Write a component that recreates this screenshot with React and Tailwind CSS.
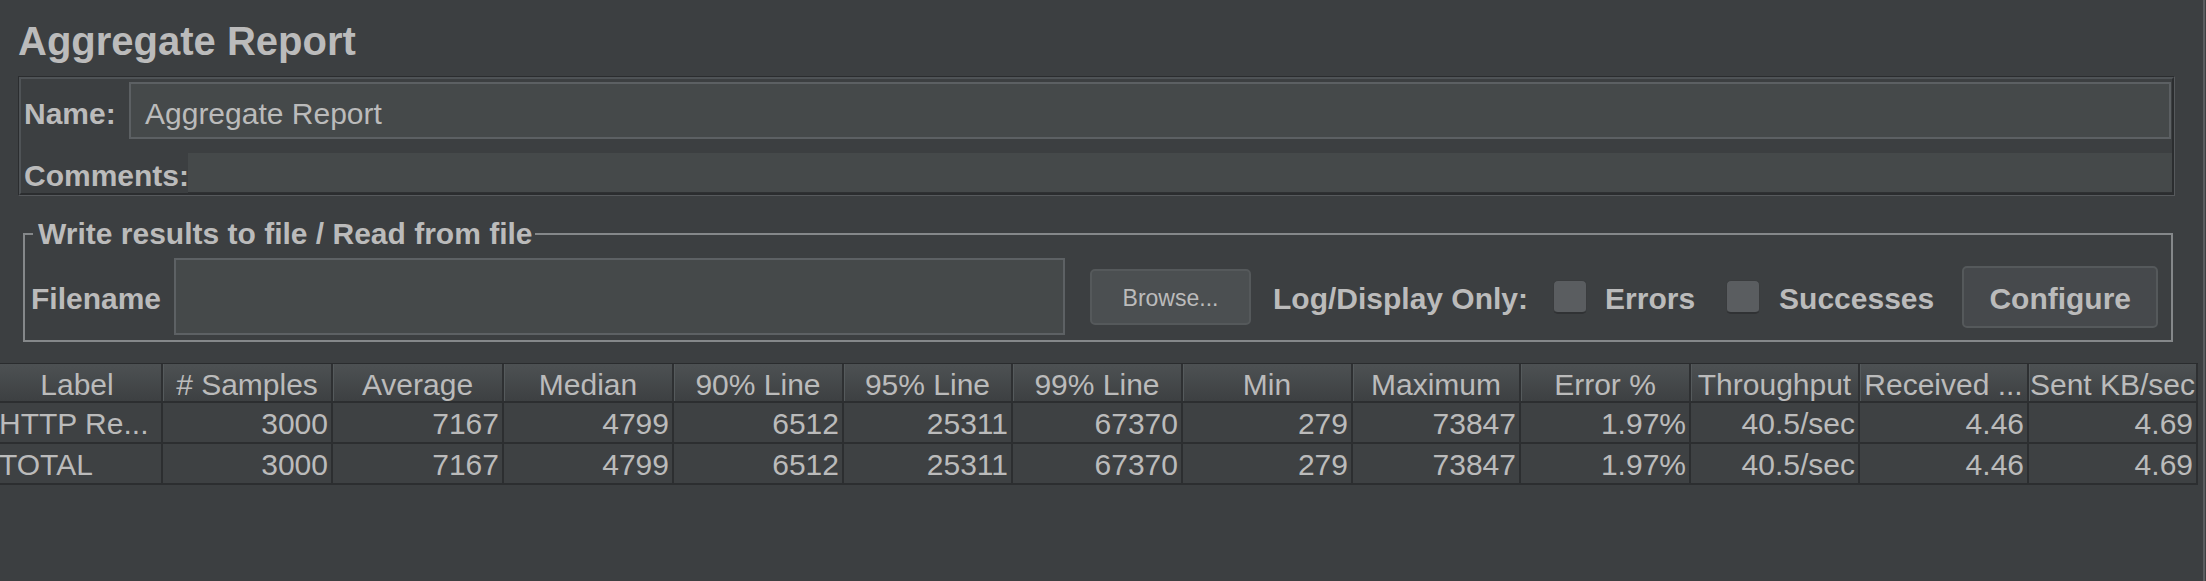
const columns = [
  'Label',
  '# Samples',
  'Average',
  'Median',
  '90% Line',
  '95% Line',
  '99% Line',
  'Min',
  'Maximum',
  'Error %',
  'Throughput',
  'Received ...',
  'Sent KB/sec',
]

const rows = [
  ['HTTP Re...', '3000', '7167', '4799', '6512', '25311', '67370', '279', '73847', '1.97%', '40.5/sec', '4.46', '4.69'],
  ['TOTAL', '3000', '7167', '4799', '6512', '25311', '67370', '279', '73847', '1.97%', '40.5/sec', '4.46', '4.69'],
]

const gridCols =
  'grid grid-cols-[170px_170px_171px_170px_170px_169px_170px_170px_168px_170px_169px_169px_169px]'

function Checkbox() {
  return (
    <div className="w-[34px] h-[34px] rounded-[5px] bg-[#5a5d60] border border-[#3a3c3e] border-b-2 border-b-[#303234]" />
  )
}

function ResultsTable() {
  return (
    <div className="-ml-[7px] w-[2205px] mt-[21px]">
      <div className={`${gridCols} h-[38px] border-t border-[#2a2c2e] bg-gradient-to-b from-[#4d5153] to-[#3d4042]`}>
        {columns.map((col) => (
          <div
            key={col}
            className="flex items-center justify-center pt-[5px] text-[30px] leading-none whitespace-nowrap overflow-hidden border-r-2 border-[#2e3032] shadow-[inset_1px_0_0_#555a5c]"
          >
            {col}
          </div>
        ))}
      </div>
      {rows.map((row, r) => (
        <div key={r} className={`${gridCols} h-[41px] border-t-2 border-[#2c2e30]`}>
          {row.map((cell, i) => (
            <div
              key={i}
              className={`flex items-center pt-[2px] text-[30px] leading-none whitespace-nowrap overflow-hidden bg-[#3e4143] border-r-2 border-[#2c2e30] ${
                i === 0 ? 'justify-start pl-[6px]' : 'justify-end pr-[3px]'
              }`}
            >
              {cell}
            </div>
          ))}
        </div>
      ))}
      <div className="h-[2px] bg-[#2c2e30]" />
    </div>
  )
}

export default function App() {
  return (
    <div className="w-[2206px] h-[581px] bg-[#3c3f41] flex overflow-hidden text-[#bbbbbb] font-['Liberation_Sans',Arial,sans-serif]">
      <div className="flex-1 min-w-0 flex flex-col">
        <h1 className="mt-[18px] ml-[18px] text-[40px] leading-[46px] font-bold">Aggregate Report</h1>

        <div className="mt-[12px] ml-[18px] w-[2157px] border border-t-[#2b2d2f] border-l-[#2b2d2f] border-b-[#56595c] border-r-[#56595c]">
          <div className="border-2 border-t-[#4f5356] border-l-[#4f5356] border-b-[#2b2d2f] border-r-[#2b2d2f]">
            <div className="flex items-center pt-[3px] pl-[3px] pr-[1px]">
              <span className="w-[105px] pt-[6px] text-[30px] font-bold leading-none">Name:</span>
              <div className="flex-1 h-[57px] flex items-center pl-[14px] pt-[6px] bg-[#45494a] border-2 border-[#5c6063] text-[30px] leading-none">
                Aggregate Report
              </div>
            </div>
            <div className="flex items-center mt-[14px] pl-[3px]">
              <span className="w-[164px] pt-[5px] text-[30px] font-bold leading-none">Comments:</span>
              <div className="flex-1 h-[40px] bg-[#45494a] border-b border-[#2f3133]" />
            </div>
          </div>
        </div>

        <fieldset className="mt-[21px] ml-[23px] w-[2150px] border-2 border-[#85888a] px-0 pb-[5px]">
          <legend className="ml-[8px] pl-[5px] pr-[2px] text-[30px] font-bold leading-[34px]">
            Write results to file / Read from file
          </legend>
          <div className="flex items-center pt-[7px] pl-[6px]">
            <span className="w-[143px] pt-[5px] text-[30px] font-bold leading-none">Filename</span>
            <div className="w-[891px] h-[77px] bg-[#45494a] border-2 border-[#5d6164]" />
            <button className="ml-[25px] w-[161px] h-[56px] pt-[3px] rounded-[5px] bg-[#4b4f51] border-2 border-[#55595b] text-[23px] leading-none text-[#bbbbbb]">
              Browse...
            </button>
            <span className="ml-[22px] pt-[5px] text-[30px] font-bold leading-none">Log/Display Only:</span>
            <div className="ml-[25px]">
              <Checkbox />
            </div>
            <span className="ml-[18px] pt-[5px] text-[30px] font-bold leading-none">Errors</span>
            <div className="ml-[31px]">
              <Checkbox />
            </div>
            <span className="ml-[19px] pt-[5px] text-[30px] font-bold leading-none">Successes</span>
            <button className="ml-[28px] w-[196px] h-[62px] pt-[4px] rounded-[5px] bg-[#46494c] border-2 border-[#55595b] text-[30px] font-bold leading-none text-[#bbbbbb]">
              Configure
            </button>
          </div>
        </fieldset>

        <ResultsTable />
      </div>
      <div className="w-[2px] bg-[#5a5d5f]" />
      <div className="w-[1px] bg-[#3c3f41]" />
    </div>
  )
}
